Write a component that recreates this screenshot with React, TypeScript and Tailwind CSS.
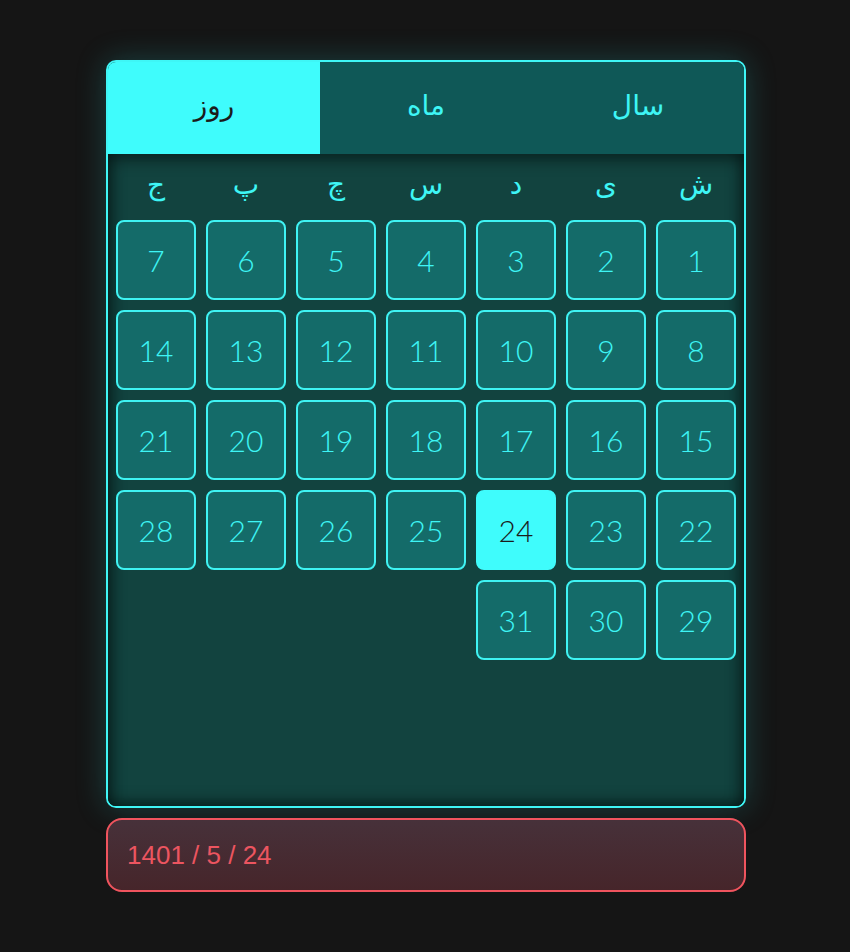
import React from "react";

const weekDays = ["ش", "ی", "د", "س", "چ", "پ", "ج"];
const days = Array.from({ length: 31 }, (_, i) => i + 1);

function Tabs() {
  const tabs = [
    { label: "سال", active: false },
    { label: "ماه", active: false },
    { label: "روز", active: true },
  ];
  return (
    <div dir="rtl" className="grid grid-cols-3 h-[92px]">
      {tabs.map((t) => (
        <div
          key={t.label}
          className={
            t.active
              ? "flex items-center justify-center pb-[4px] bg-[#3ffcfc] text-[#1b1b1b] text-[28px]"
              : "flex items-center justify-center pb-[4px] bg-[#0f5857] text-[#3ef5f5] text-[28px]"
          }
        >
          {t.label}
        </div>
      ))}
    </div>
  );
}

export default function App() {
  return (
    <div className="min-h-[952px] bg-[#151515] flex flex-col items-center pt-[60px] pl-[2px] font-['DejaVu_Sans',sans-serif]">
      <div className="w-[640px] h-[748px] border-2 border-[#3ff6f6] rounded-[10px] overflow-hidden flex flex-col shadow-[0_0_30px_rgba(40,200,200,0.25)]">
        <Tabs />
        <div className="flex-1 bg-[#12433f] shadow-[inset_0_8px_14px_rgba(0,0,0,0.35),inset_12px_0_14px_-6px_rgba(0,0,0,0.3),inset_-12px_0_14px_-6px_rgba(0,0,0,0.3),inset_0_-12px_14px_-6px_rgba(0,0,0,0.35)] px-2">
          <div dir="rtl" className="grid grid-cols-7 gap-x-[10px] h-[66px] items-center">
            {weekDays.map((d) => (
              <div key={d} className="text-center text-[28px] text-[#3ef5f5] leading-none pb-1">
                {d}
              </div>
            ))}
          </div>
          <div dir="rtl" className="grid grid-cols-7 gap-[10px]">
            {days.map((d) => (
              <div
                key={d}
                className={
                  d === 24
                    ? "h-[80px] rounded-[8px] border-2 border-[#3ffcfc] bg-[#3ffcfc] text-[#1b1b1b] flex items-center justify-center text-[30px] font-light font-['Lato',sans-serif]"
                    : "h-[80px] rounded-[8px] border-2 border-[#3ff3f3] bg-[#146b69] text-[#3ef5f5] flex items-center justify-center text-[30px] font-light font-['Lato',sans-serif]"
                }
              >
                {d}
              </div>
            ))}
          </div>
        </div>
      </div>
      <div className="mt-[10px] w-[640px] h-[74px] border-2 border-[#f0545e] rounded-[16px] bg-[linear-gradient(to_bottom,#47313a,#46252a)] flex items-center px-[19px]">
        <span className="text-[26px] text-[#ec5560] font-['Liberation_Sans',sans-serif]">1401 / 5 / 24</span>
      </div>
    </div>
  );
}
